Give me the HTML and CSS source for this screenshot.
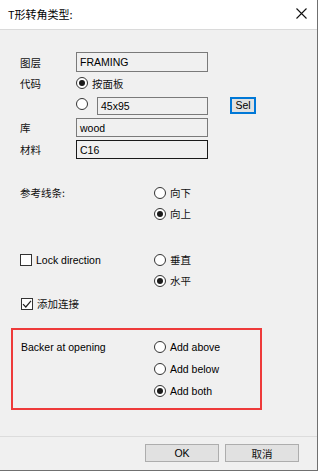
FILE: index.html
```html
<!DOCTYPE html>
<html>
<head>
<meta charset="utf-8">
<link rel="stylesheet" href="styles.css">
</head>
<body>
<div class="window">
  <div class="titlebar">
    <span class="title">T形转角类型:</span>
    <svg class="close" width="11" height="11" viewBox="0 0 11 11"><path d="M0.5 0.5L10.5 10.5M10.5 0.5L0.5 10.5" stroke="#111" stroke-width="1.1" fill="none"/></svg>
  </div>
  <div class="body">
    <div class="form">
      <div class="row r1"><span class="lbl cjk">图层</span><span class="field w132">FRAMING</span></div>
      <div class="row r2"><span class="lbl cjk">代码</span><span class="radio on"></span><span class="rtext cjk">按面板</span></div>
      <div class="row r3"><span class="lbl"></span><span class="radio r3radio"></span><span class="field w111">45x95</span><span class="selbtn">Sel</span></div>
      <div class="row r4"><span class="lbl cjk">库</span><span class="field w132">wood</span></div>
      <div class="row r5"><span class="lbl cjk">材料</span><span class="field w132 dark">C16</span></div>
    </div>

    <div class="group g1">
      <div class="glabel cjk">参考线条:</div>
      <div class="opts">
        <div class="opt"><span class="radio"></span><span class="rtext cjk">向下</span></div>
        <div class="opt"><span class="radio on"></span><span class="rtext cjk">向上</span></div>
      </div>
    </div>

    <div class="group g2">
      <div class="glabel"><span class="check"></span><span class="ctext">Lock direction</span></div>
      <div class="opts">
        <div class="opt"><span class="radio"></span><span class="rtext cjk">垂直</span></div>
        <div class="opt"><span class="radio on"></span><span class="rtext cjk">水平</span></div>
      </div>
    </div>

    <div class="addrow">
      <span class="check checked"><svg width="10" height="10" viewBox="0 0 10 10"><path d="M1 5.2L3.8 8L9 1.8" stroke="#222" stroke-width="1.2" fill="none"/></svg></span><span class="ctext cjk">添加连接</span>
    </div>

    <div class="redbox">
      <div class="group g3">
        <div class="glabel lat">Backer at opening</div>
        <div class="opts">
          <div class="opt"><span class="radio"></span><span class="rtext lat">Add above</span></div>
          <div class="opt"><span class="radio"></span><span class="rtext lat">Add below</span></div>
          <div class="opt"><span class="radio on"></span><span class="rtext lat">Add both</span></div>
        </div>
      </div>
    </div>

    <div class="footer">
      <span class="btn">OK</span>
      <span class="btn cjk">取消</span>
    </div>
  </div>
</div>
</body>
</html>
```

FILE: styles.css
```css
html, body {
  margin: 0;
  padding: 0;
  background: #ffffff;
}
body {
  font-family: "Liberation Sans", "Noto Sans CJK SC", sans-serif;
  font-size: 10.5px;
  color: #000;
}
.cjk {
  font-family: "Noto Sans CJK SC", sans-serif;
  font-size: 10.5px;
  color: #111;
}
.window {
  width: 317px;
  height: 470px;
  border-right: 1px solid #707070;
  border-bottom: 1px solid #707070;
  background: #f0f0f0;
  display: flex;
  flex-direction: column;
}
.titlebar {
  height: 29px;
  background: #ffffff;
  border-bottom: 1px solid #dadada;
  display: flex;
  align-items: center;
  justify-content: space-between;
  padding: 0 10px 0 8px;
}
.title {
  font-family: "Noto Sans CJK SC", sans-serif;
  font-size: 11px;
  margin-top: -1px;
}
.close {
  display: block;
  margin-top: -2px;
}
.body {
  flex: 1;
  display: flex;
  flex-direction: column;
}
.form {
  padding-top: 22px;
  padding-left: 20px;
}
.row {
  display: flex;
  align-items: center;
}
.lbl {
  width: 56px;
  flex: none;
}
.r1 { height: 20px; }
.r2 { height: 22px; }
.r3 { height: 18px; margin-top: 3px; }
.r4 { height: 19px; margin-top: 3px; }
.r5 { height: 19px; margin-top: 3px; }
.field {
  box-sizing: border-box;
  height: 100%;
  border: 1px solid #7a7a7a;
  background: #f0f0f0;
  padding-left: 3px;
  display: flex;
  align-items: center;
  font-size: 10.5px;
}
.w132 { width: 132px; }
.w111 { width: 111px; margin-left: 9px; }
.dark { border-color: #1a1a1a; }
.r3radio { margin-top: -5px; }
.selbtn {
  box-sizing: border-box;
  width: 26px;
  height: 17px;
  margin-left: 22px;
  margin-top: -2px;
  border: 2px solid #0078d7;
  background: #e1e1e1;
  display: flex;
  align-items: center;
  justify-content: center;
  font-size: 10.5px;
}
.radio {
  box-sizing: border-box;
  width: 12px;
  height: 12px;
  border: 1px solid #333;
  border-radius: 50%;
  background: #fff;
  flex: none;
  display: flex;
  align-items: center;
  justify-content: center;
}
.radio.on::after {
  content: "";
  width: 6px;
  height: 6px;
  border-radius: 50%;
  background: #1a1a1a;
}
.rtext {
  margin-left: 4px;
}
.group {
  display: grid;
  grid-template-columns: 134px 1fr;
}
.g1 { margin-top: 23px; padding-left: 20px; }
.g2 { margin-top: 25px; padding-left: 20px; }
.glabel {
  height: 21px;
  display: flex;
  align-items: center;
}
.opt {
  height: 21px;
  display: flex;
  align-items: center;
}
.check {
  box-sizing: border-box;
  width: 12px;
  height: 12px;
  border: 1px solid #333;
  background: #fff;
  flex: none;
  display: flex;
  align-items: center;
  justify-content: center;
}
.ctext { margin-left: 4px; }
.addrow {
  margin-top: 2px;
  padding-left: 21px;
  height: 21px;
  display: flex;
  align-items: center;
}
.redbox {
  box-sizing: border-box;
  margin-top: 14px;
  margin-left: 11px;
  width: 251px;
  height: 82px;
  border: 2px solid #ee3a3a;
  padding: 6px 0 0 8px;
}
.g3 { grid-template-columns: 133px 1fr; }
.g3 .glabel, .g3 .opt { height: 22px; }
.footer {
  margin-top: auto;
  height: 34px;
  border-top: 1px solid #dcdcdc;
  display: flex;
  justify-content: flex-end;
  align-items: flex-start;
  padding: 7px 18px 0 0;
  gap: 6px;
  box-sizing: border-box;
}
.btn {
  box-sizing: border-box;
  width: 74px;
  height: 18px;
  border: 1px solid #adadad;
  background: #e1e1e1;
  display: flex;
  align-items: center;
  justify-content: center;
}
```
